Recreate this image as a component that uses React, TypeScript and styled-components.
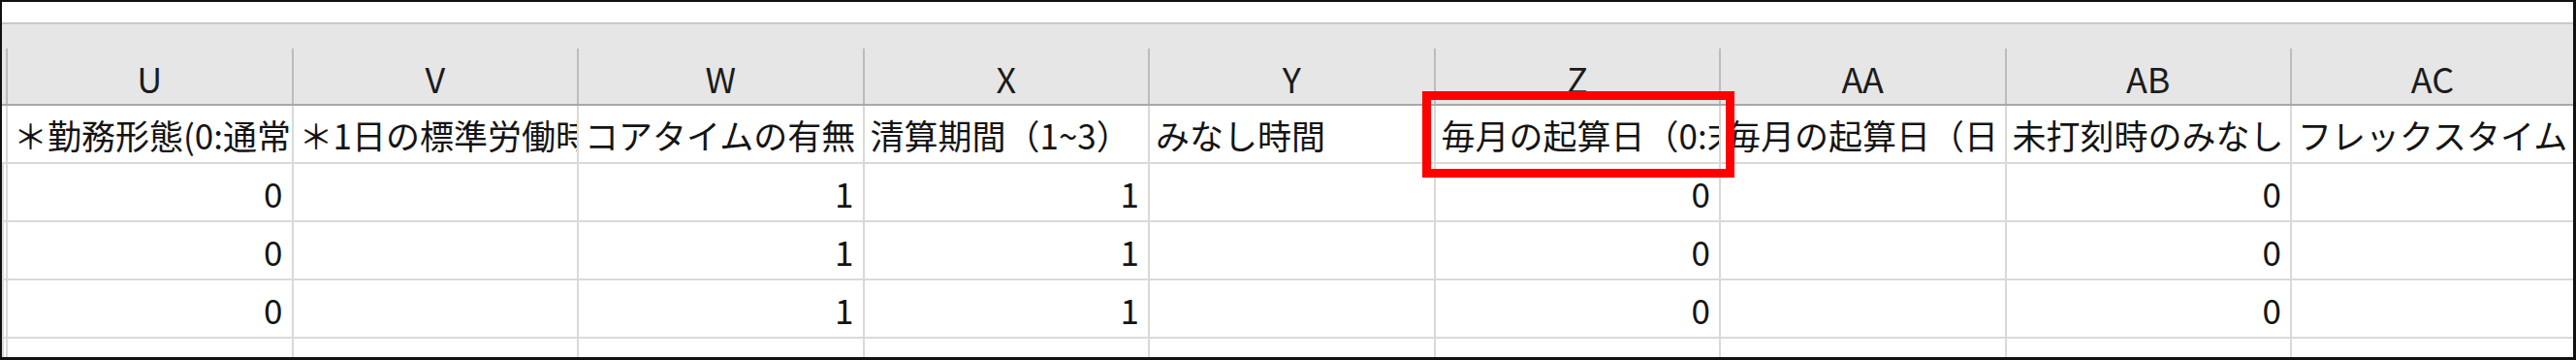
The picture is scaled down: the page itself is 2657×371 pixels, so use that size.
import styled, { createGlobalStyle } from 'styled-components'

const GlobalStyle = createGlobalStyle`
  html, body {
    margin: 0;
    padding: 0;
    background: #ffffff;
  }
  body {
    font-family: "Noto Sans CJK JP", "Noto Sans", sans-serif;
  }
`

const columns = ['U', 'V', 'W', 'X', 'Y', 'Z', 'AA', 'AB', 'AC']

// only the part Excel shows before the cell clips it
const titles = [
  '＊勤務形態(0:通常',
  '＊1日の標準労働時',
  'コアタイムの有無',
  '清算期間（1~3）',
  'みなし時間',
  '毎月の起算日（0:末',
  '毎月の起算日（日',
  '未打刻時のみなし',
  'フレックスタイム',
]

const dataRow = ['0', '', '1', '1', '', '0', '', '0', '']
const rows = [dataRow, dataRow, dataRow, dataRow]

const Frame = styled.div`
  position: relative;
  box-sizing: border-box;
  width: 2657px;
  height: 371px;
  border-style: solid;
  border-color: #111;
  border-width: 2px 3px 3px 2px;
  overflow: hidden;
  background: #fff;
`

const TopBand = styled.div`
  height: 21px;
  border-bottom: 2px solid #c8c8c8;
  background: #fff;
`

const HeaderArea = styled.div`
  background: #e6e6e6;
  padding-top: 25px;
  border-bottom: 2px solid #a8a8a8;
`

const Grid = styled.div`
  display: grid;
  grid-template-columns: 4px repeat(8, 294.5px) 1fr;
`

const HeadCell = styled.div`
  box-sizing: border-box;
  height: 57px;
  padding-top: 2px;
  border-left: 2px solid #bcbcbc;
  display: flex;
  align-items: center;
  justify-content: center;
  font-size: 36px;
  color: #1c1c1c;
  &:first-child {
    border-left: none;
  }
`

const Cell = styled.div<{ $num?: boolean }>`
  box-sizing: border-box;
  height: 60px;
  min-width: 0;
  border-left: 2px solid #d9d9d9;
  border-bottom: 2px solid #d9d9d9;
  display: flex;
  align-items: center;
  justify-content: ${p => (p.$num ? 'flex-end' : 'flex-start')};
  padding: ${p => (p.$num ? '0 9px 0 0' : '0 0 0 6px')};
  font-size: 35px;
  color: #141414;
  white-space: nowrap;
  overflow: hidden;
  &:first-child {
    border-left: none;
  }
`

const Highlight = styled.div`
  position: absolute;
  left: 1465px;
  top: 92px;
  width: 322px;
  height: 89px;
  box-sizing: border-box;
  border: 9px solid #ff0000;
  pointer-events: none;
`

export default function App() {
  return (
    <>
      <GlobalStyle />
      <Frame>
        <TopBand />
        <HeaderArea>
          <Grid>
            <HeadCell />
            {columns.map(c => (
              <HeadCell key={c}>{c}</HeadCell>
            ))}
          </Grid>
        </HeaderArea>
        <Grid>
          <Cell />
          {titles.map(t => (
            <Cell key={t}>{t}</Cell>
          ))}
          {rows.map((r, i) =>
            [<Cell key={'l' + i} />].concat(
              r.map((v, j) => (
                <Cell key={i + '-' + j} $num>
                  {v}
                </Cell>
              ))
            )
          )}
        </Grid>
        <Highlight />
      </Frame>
    </>
  )
}
